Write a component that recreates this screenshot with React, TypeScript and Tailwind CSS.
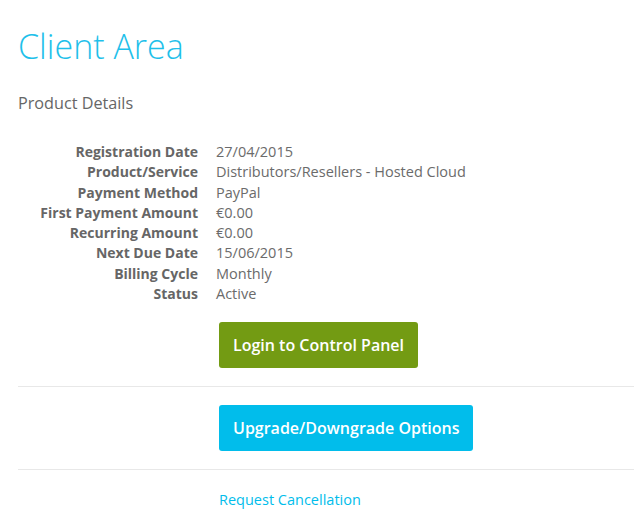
const rows: [string, string][] = [
  ['Registration Date', '27/04/2015'],
  ['Product/Service', 'Distributors/Resellers - Hosted Cloud'],
  ['Payment Method', 'PayPal'],
  ['First Payment Amount', '€0.00'],
  ['Recurring Amount', '€0.00'],
  ['Next Due Date', '15/06/2015'],
  ['Billing Cycle', 'Monthly'],
  ['Status', 'Active'],
]

export default function App() {
  return (
    <div className="min-h-screen bg-white pl-[18px] pt-[24px] font-['Open_Sans',sans-serif] text-[#666]">
      <h1 className="text-[34px] font-light leading-[44px] text-[#1ec0ea]">Client Area</h1>
      <h2 className="mt-[24px] text-[16.2px] leading-[22px] text-[#666]">Product Details</h2>

      <div className="mt-[28px] grid grid-cols-[180px_1fr] gap-x-[18px] leading-[20.3px]">
        {rows.map(([label, value]) => (
          <div key={label} className="contents">
            <div className="text-right text-[14px] font-bold text-[#666]">{label}</div>
            <div className="text-[14.5px] text-[#6b6b6b]">{value}</div>
          </div>
        ))}
      </div>

      <div className="pl-[201px] pt-[18px] pb-[18px]">
        <button className="h-[46px] rounded-[3px] bg-[#739b13] px-[14px] text-[16px] font-semibold text-white">
          Login to Control Panel
        </button>
      </div>
      <div className="border-t border-[#e8e8e8]" />
      <div className="pl-[201px] pt-[18px] pb-[18px]">
        <button className="h-[46px] rounded-[3px] bg-[#01bdeb] px-[14px] text-[16px] font-semibold text-white">
          Upgrade/Downgrade Options
        </button>
      </div>
      <div className="border-t border-[#e8e8e8]" />
      <div className="pl-[201px] pt-[17px]">
        <a href="#" className="text-[14.5px] leading-[20px] text-[#01bdeb]">Request Cancellation</a>
      </div>
    </div>
  )
}
